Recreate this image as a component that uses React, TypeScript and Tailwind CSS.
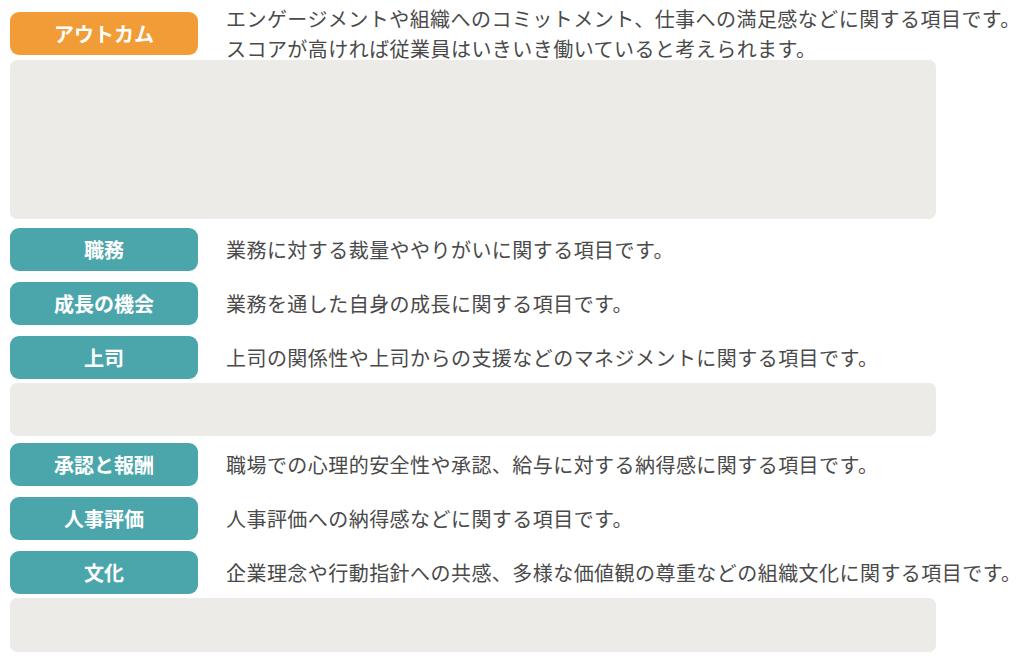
const font = { fontFamily: '"Noto Sans CJK JP", "Noto Sans", sans-serif' };

type Item = {
  label: string;
  lines: string[];
  color: 'orange' | 'teal';
  mt: string;
};

const Row = ({ item }: { item: Item }) => (
  <div className={`flex h-[43px] items-center ${item.mt}`}>
    <div
      className={`flex h-[43px] w-[188px] shrink-0 items-center justify-center rounded-[9px] text-[20px] font-bold text-white ${
        item.color === 'orange' ? 'bg-[#f29c38]' : 'bg-[#4ba6ab]'
      }`}
    >
      {item.label}
    </div>
    <p className="ml-[28px] whitespace-nowrap text-[20px] leading-[30px] tracking-[0.45px] text-[#4a4a4a]">
      {item.lines.map((line, i) => (
        <span key={i} className="block">
          {line}
        </span>
      ))}
    </p>
  </div>
);

const Placeholder = ({ className }: { className: string }) => (
  <div className={`w-[926px] rounded-[7px] bg-[#ecebe8] ${className}`} />
);

export default function App() {
  return (
    <main className="h-[658px] w-[1030px] overflow-hidden bg-white pl-[10px]" style={font}>
      <div className="flex flex-col">
        <Row
          item={{
            label: 'アウトカム',
            color: 'orange',
            mt: 'mt-[12px]',
            lines: [
              'エンゲージメントや組織へのコミットメント、仕事への満足感などに関する項目です。',
              'スコアが高ければ従業員はいきいき働いていると考えられます。',
            ],
          }}
        />
        <Placeholder className="mt-[5px] h-[159px]" />
        <Row item={{ label: '職務', color: 'teal', mt: 'mt-[9px]', lines: ['業務に対する裁量ややりがいに関する項目です。'] }} />
        <Row item={{ label: '成長の機会', color: 'teal', mt: 'mt-[11px]', lines: ['業務を通した自身の成長に関する項目です。'] }} />
        <Row
          item={{ label: '上司', color: 'teal', mt: 'mt-[11px]', lines: ['上司の関係性や上司からの支援などのマネジメントに関する項目です。'] }}
        />
        <Placeholder className="mt-[4px] h-[53px]" />
        <Row
          item={{ label: '承認と報酬', color: 'teal', mt: 'mt-[7px]', lines: ['職場での心理的安全性や承認、給与に対する納得感に関する項目です。'] }}
        />
        <Row item={{ label: '人事評価', color: 'teal', mt: 'mt-[11px]', lines: ['人事評価への納得感などに関する項目です。'] }} />
        <Row
          item={{
            label: '文化',
            color: 'teal',
            mt: 'mt-[11px]',
            lines: ['企業理念や行動指針への共感、多様な価値観の尊重などの組織文化に関する項目です。'],
          }}
        />
        <Placeholder className="mt-[4px] h-[54px]" />
      </div>
    </main>
  );
}
